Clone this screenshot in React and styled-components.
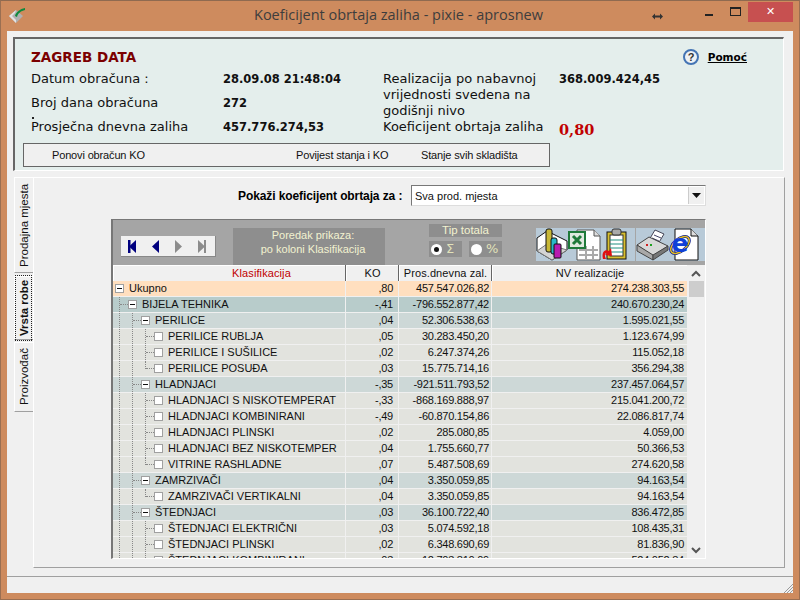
import React from "react";
import styled, { createGlobalStyle } from "styled-components";

const GlobalStyle = createGlobalStyle`
  html, body { margin: 0; padding: 0; }
  body { width: 800px; height: 600px; overflow: hidden; background: #ce8b5e; }
`;

const rows = [
  { level: 0, name: "Ukupno", ko: ",80", avg: "457.547.026,82", nv: "274.238.303,55" },
  { level: 1, name: "BIJELA TEHNIKA", ko: "-,41", avg: "-796.552.877,42", nv: "240.670.230,24" },
  { level: 2, name: "PERILICE", ko: ",04", avg: "52.306.538,63", nv: "1.595.021,55" },
  { level: 3, name: "PERILICE RUBLJA", ko: ",05", avg: "30.283.450,20", nv: "1.123.674,99" },
  { level: 3, name: "PERILICE I SUŠILICE", ko: ",02", avg: "6.247.374,26", nv: "115.052,18" },
  { level: 3, name: "PERILICE POSUĐA", ko: ",03", avg: "15.775.714,16", nv: "356.294,38", last: true },
  { level: 2, name: "HLADNJACI", ko: "-,35", avg: "-921.511.793,52", nv: "237.457.064,57" },
  { level: 3, name: "HLADNJACI S NISKOTEMPERAT", ko: "-,33", avg: "-868.169.888,97", nv: "215.041.200,72" },
  { level: 3, name: "HLADNJACI KOMBINIRANI", ko: "-,49", avg: "-60.870.154,86", nv: "22.086.817,74" },
  { level: 3, name: "HLADNJACI PLINSKI", ko: ",02", avg: "285.080,85", nv: "4.059,00" },
  { level: 3, name: "HLADNJACI BEZ NISKOTEMPER", ko: ",04", avg: "1.755.660,77", nv: "50.366,53" },
  { level: 3, name: "VITRINE RASHLADNE", ko: ",07", avg: "5.487.508,69", nv: "274.620,58", last: true },
  { level: 2, name: "ZAMRZIVAČI", ko: ",04", avg: "3.350.059,85", nv: "94.163,54" },
  { level: 3, name: "ZAMRZIVAČI VERTIKALNI", ko: ",04", avg: "3.350.059,85", nv: "94.163,54", last: true },
  { level: 2, name: "ŠTEDNJACI", ko: ",03", avg: "36.100.722,40", nv: "836.472,85" },
  { level: 3, name: "ŠTEDNJACI ELEKTRIČNI", ko: ",03", avg: "5.074.592,18", nv: "108.435,31" },
  { level: 3, name: "ŠTEDNJACI PLINSKI", ko: ",02", avg: "6.348.690,69", nv: "81.836,90" },
  { level: 3, name: "ŠTEDNJACI KOMBINIRANI", ko: ",03", avg: "12.703.810,09", nv: "524.052,84" },
];

const rowColors = ["#ffdfbf", "#b8cccb", "#cdd8d7", "#e2e3de"];

const AppIcon = () => (
  <svg width="18" height="18" viewBox="0 0 18 18">
    <path d="M0 9 L7 3 L14 9 L7 16 Z" fill="#b0b0b0" />
    <path d="M0 9 L7 16 L7 13 L3 9 L6 6 L7 3 Z" fill="#e4e4e4" />
    <path d="M6 9 C7 5 11 2 16 1 L16 3 C12 4 9 6 8 10 Z" fill="#0d8a3e" />
  </svg>
);

const ResizeIcon = () => (
  <svg width="11" height="7" viewBox="0 0 11 7">
    <path d="M0 3.5 L3 0.5 L3 2.5 L8 2.5 L8 0.5 L11 3.5 L8 6.5 L8 4.5 L3 4.5 L3 6.5 Z" fill="#333" />
  </svg>
);

const HelpIcon = () => (
  <svg width="16" height="16" viewBox="0 0 16 16">
    <circle cx="8" cy="8" r="7" fill="#eef1f4" stroke="#4474b4" strokeWidth="2" />
    <text x="8" y="12" textAnchor="middle" fontFamily="'Liberation Sans', sans-serif" fontWeight="700" fontSize="11" fill="#333">?</text>
  </svg>
);

const NavIcon = ({ dir, bar, color }) => (
  <svg width="9" height="13" viewBox="0 0 9 13">
    {dir === "left" ? <path d="M8 0 L8 13 L1 6.5 Z" fill={color} /> : <path d="M1 0 L1 13 L8 6.5 Z" fill={color} />}
    {bar && <rect x={dir === "left" ? 0 : 7} width="2.5" height="13" fill={color} />}
  </svg>
);

const ChartIcon = () => (
  <svg width="32" height="33" viewBox="0 0 32 33">
    <path d="M1 10 L11 3 L31 13 L31 22 L16 32 L1 23 Z" fill="#fff" stroke="#111" />
    <path d="M1 23 L11 16 L31 22 L16 32 Z" fill="#d4d4d4" stroke="#777" />
    <path d="M11 3 L11 16" stroke="#111" />
    <rect x="10" y="1" width="6" height="23" rx="2" fill="#c8b838" stroke="#111" />
    <rect x="15" y="10" width="6" height="16" rx="2" fill="#2ab8c8" stroke="#111" />
    <rect x="18" y="16" width="7" height="14" rx="1" fill="#b81cb0" stroke="#111" />
  </svg>
);

const ExcelIcon = () => (
  <svg width="33" height="32" viewBox="0 0 33 32">
    <path d="M9 1 L26 1 L32 7 L32 31 L9 31 Z" fill="#fff" stroke="#555" />
    <path d="M26 1 L26 7 L32 7" fill="#ddd" stroke="#555" />
    <path d="M11 21 H30 M11 26 H30 M18 17 V30 M25 17 V30" stroke="#aaa" strokeWidth="2" />
    <rect x="1" y="3" width="16" height="16" fill="#dfe9df" stroke="#1f7a3a" strokeWidth="2" />
    <path d="M5 7 L13 15 M13 7 L5 15" stroke="#1f7a3a" strokeWidth="3" />
  </svg>
);

const ClipIcon = () => (
  <svg width="26" height="33" viewBox="0 0 26 33">
    <rect x="6" y="4" width="19" height="27" fill="#d8c030" stroke="#111" />
    <rect x="9" y="7" width="13" height="21" fill="#fff" stroke="#333" />
    <path d="M9 12 H22 M9 16 H22 M9 20 H22 M9 24 H22" stroke="#1f8f80" />
    <rect x="11" y="1" width="9" height="6" rx="2" fill="#aaa" stroke="#333" />
    <path d="M2 31 C0 23 5 21 8 23 L10 20 L11 28 L4 27 L6 25 C4 25 3 27 5 31 Z" fill="#e01010" />
  </svg>
);

const PrinterIcon = () => (
  <svg width="33" height="32" viewBox="0 0 33 32">
    <path d="M13 11 L19 1 L28 5 L22 15 Z" fill="#fff" stroke="#445" />
    <path d="M18 6 L25 9 M16 9 L23 12" stroke="#446" />
    <path d="M1 16 L13 8 L32 17 L17 27 Z" fill="#d8d8d8" stroke="#444" />
    <path d="M1 16 L17 26 L17 31 L1 22 Z" fill="#a8a8a8" stroke="#444" />
    <path d="M17 26 L32 17 L32 21 L17 31 Z" fill="#777" stroke="#444" />
    <rect x="10" y="15" width="2" height="2" fill="#d02020" />
    <rect x="14" y="15" width="2" height="2" fill="#20a020" />
  </svg>
);

const BrowserIcon = () => (
  <svg width="30" height="33" viewBox="0 0 30 33">
    <path d="M6 1 L22 1 L29 8 L29 32 L6 32 Z" fill="#fff" stroke="#111" />
    <path d="M22 1 L22 8 L29 8" fill="#ddd" stroke="#111" />
    <ellipse cx="11" cy="17" rx="11" ry="6" transform="rotate(-40 11 17)" fill="none" stroke="#10208c" strokeWidth="3" />
    <ellipse cx="11" cy="17" rx="11" ry="6" transform="rotate(-40 11 17)" fill="none" stroke="#e8c020" strokeWidth="1.4" />
    <text x="11" y="24" textAnchor="middle" fontFamily="'DejaVu Sans', sans-serif" fontWeight="700" fontSize="25" fill="#1040d8">e</text>
  </svg>
);

const App = () => (
  <>
    <GlobalStyle />
    <Window>
      <TitleBar>
        <TitleIcon><AppIcon /></TitleIcon>
        <Title>Koeficijent obrtaja zaliha - pixie - aprosnew</Title>
        <Resize><ResizeIcon /></Resize>
        <WinButton><MinGlyph /></WinButton>
        <WinButton><MaxGlyph /></WinButton>
        <CloseButton>✕</CloseButton>
      </TitleBar>

      <Client>
        <TopPanel>
          <Company>
            <CompanyName>ZAGREB DATA</CompanyName>
            <HelpLink><HelpIcon /><HelpText>Pomoć</HelpText></HelpLink>
          </Company>
          <Facts>
            <FactColumn>
              <FactRow>
                <Label>Datum obračuna :</Label>
                <Value>28.09.08 21:48:04</Value>
              </FactRow>
              <FactRow>
                <Label>Broj dana obračuna</Label>
                <Value>272</Value>
              </FactRow>
              <StrayDot />
              <FactRow>
                <Label>Prosječna dnevna zaliha</Label>
                <Value>457.776.274,53</Value>
              </FactRow>
            </FactColumn>
            <WideColumn>
              <WideRow>
                <Label>Realizacija po nabavnoj vrijednosti svedena na godišnji nivo</Label>
                <Value>368.009.424,45</Value>
              </WideRow>
              <WideRow>
                <NoWrapLabel>Koeficijent obrtaja zaliha</NoWrapLabel>
                <Coefficient>0,80</Coefficient>
              </WideRow>
            </WideColumn>
          </Facts>
          <ActionStrip>
            <Action>Ponovi obračun KO</Action>
            <Action>Povijest stanja i KO</Action>
            <Action>Stanje svih skladišta</Action>
          </ActionStrip>
        </TopPanel>

        <TabArea>
          <TabColumn>
            <Tab $height={96} $gap={3}>Prodajna mjesta</Tab>
            <Tab $height={64} $gap={2} $active><Focus>Vrsta robe</Focus></Tab>
            <Tab $height={70} $gap={0}>Proizvođač</Tab>
          </TabColumn>
          <TabPage>
            <Picker>
              <PickerLabel>Pokaži koeficijent obrtaja za :</PickerLabel>
              <Select>
                <SelectText>Sva prod. mjesta</SelectText>
                <SelectArrow>
                  <svg width="9" height="5" viewBox="0 0 9 5"><path d="M0 0 H9 L4.5 5 Z" fill="#111" /></svg>
                </SelectArrow>
              </Select>
            </Picker>

            <GridBox>
              <Toolbar>
                <NavBar>
                  <NavIcon dir="left" bar color="#00007f" />
                  <NavIcon dir="left" color="#00007f" />
                  <NavIcon dir="right" color="#8c8c8c" />
                  <NavIcon dir="right" bar color="#8c8c8c" />
                </NavBar>
                <OrderBox>Poredak prikaza:<br />po koloni Klasifikacija</OrderBox>
                <TotalBox>
                  <TotalTitle>Tip totala</TotalTitle>
                  <TotalOptions>
                    <TotalOption><Radio $checked /><OptionGlyph>Σ</OptionGlyph></TotalOption>
                    <TotalOption><Radio /><OptionGlyph>%</OptionGlyph></TotalOption>
                  </TotalOptions>
                </TotalBox>
                <IconStrip>
                  <IconGroup $width={99}>
                    <ChartIcon />
                    <ExcelIcon />
                    <ClipIcon />
                  </IconGroup>
                  <IconGroup $width={69}>
                    <PrinterIcon />
                    <BrowserIcon />
                  </IconGroup>
                </IconStrip>
              </Toolbar>

              <GridBody>
                <TableSide>
                  <HeaderRow>
                    <HeaderCell $red>Klasifikacija</HeaderCell>
                    <HeaderCell>KO</HeaderCell>
                    <HeaderCell>Pros.dnevna zal.</HeaderCell>
                    <HeaderCell>NV realizacije</HeaderCell>
                  </HeaderRow>
                  {rows.map((row) => (
                    <Row key={row.name} $bg={rowColors[row.level]}>
                      <TreeCell>
                        {Array.from({ length: row.level }, (_, i) => (
                          <Guide key={i} $end={row.last && i === row.level - 1}>
                            {i === row.level - 1 && <Elbow />}
                          </Guide>
                        ))}
                        <Expander $leaf={row.level === 3} />
                        <RowName>{row.name}</RowName>
                      </TreeCell>
                      <NumCell $pad={5}>{row.ko}</NumCell>
                      <NumCell $pad={2}>{row.avg}</NumCell>
                      <NumCell $pad={3}>{row.nv}</NumCell>
                    </Row>
                  ))}
                </TableSide>
                <ScrollBar>
                  <ScrollArrow><svg width="10" height="7" viewBox="0 0 10 7"><path d="M1 6 L5 2 L9 6" fill="none" stroke="#555" strokeWidth="2" /></svg></ScrollArrow>
                  <ScrollThumb />
                  <ScrollTrack />
                  <ScrollArrow><svg width="10" height="7" viewBox="0 0 10 7"><path d="M1 1 L5 5 L9 1" fill="none" stroke="#555" strokeWidth="2" /></svg></ScrollArrow>
                </ScrollBar>
              </GridBody>
            </GridBox>
          </TabPage>
        </TabArea>

        <StatusBar>
          <Grip viewBox="0 0 10 10"><path d="M10 1 L1 10 M10 4 L4 10 M10 7 L7 10" stroke="#999" /></Grip>
        </StatusBar>
      </Client>
    </Window>
  </>
);

export default App;

const Window = styled.div`
  width: 800px;
  height: 600px;
  display: flex;
  flex-direction: column;
  box-sizing: border-box;
  background: #ce8b5e;
  border: 1px solid #9a6f52;
  border-top-color: #8f6a50;
  padding: 0 6px 6px;
  overflow: hidden;
`;

const TitleBar = styled.div`
  height: 30px;
  flex: none;
  display: flex;
  align-items: flex-start;
`;

const TitleIcon = styled.div`
  width: 20px;
  height: 20px;
  margin: 6px 0 0 2px;
`;

const Title = styled.div`
  flex: 1;
  padding: 5px 0 0 225px;
  font: 14.5px/18px "Open Sans", "Liberation Sans", sans-serif;
  color: #3d3d3d;
`;

const Resize = styled.div`
  margin: 5px 33px 0 0;
  height: 12px;
`;

const WinButton = styled.div`
  width: 26px;
  height: 20px;
  display: flex;
  align-items: center;
  justify-content: center;
`;

const MinGlyph = styled.div`
  width: 8px;
  height: 2px;
  margin-top: 7px;
  background: #222;
`;

const MaxGlyph = styled.div`
  width: 9px;
  height: 6px;
  border: 1px solid #222;
  border-top-width: 2px;
`;

const CloseButton = styled.div`
  width: 45px;
  height: 20px;
  margin-top: 1px;
  background: #c75050;
  color: #fff;
  font: 700 11px/20px "DejaVu Sans", sans-serif;
  text-align: center;
`;

const Client = styled.div`
  flex: 1;
  min-height: 0;
  display: flex;
  flex-direction: column;
  background: #f0f0f0;
  padding: 6px 0 0 6px;
`;

const TopPanel = styled.div`
  height: 134px;
  width: 771px;
  flex: none;
  box-sizing: border-box;
  background: #e4eeec;
  border-top: 2px solid #666;
  border-left: 2px solid #666;
  border-bottom: 1px solid #fff;
  border-right: 1px solid #fff;
  padding: 0 0 0 8px;
`;

const Company = styled.div`
  height: 26px;
  display: flex;
  align-items: center;
  padding: 5px 36px 0 8px;
`;

const CompanyName = styled.div`
  flex: 1;
  font: 700 13.5px/18px "DejaVu Sans", sans-serif;
  color: #7b0000;
`;

const HelpLink = styled.div`
  display: flex;
  align-items: center;
  gap: 9px;
`;

const HelpText = styled.span`
  font: 700 10.5px/16px "DejaVu Sans", sans-serif;
  color: #000;
  text-decoration: underline;
`;

const Facts = styled.div`
  display: flex;
  height: 72px;
  padding-left: 8px;
`;

const FactColumn = styled.div`
  width: 352px;
  padding-top: 1px;
  box-sizing: border-box;
  display: flex;
  flex-direction: column;
`;

/* tail of a clipped colon under "Broj dana obračuna" */
const StrayDot = styled.div`
  width: 2px;
  height: 2px;
  margin: 6px 0 0 1px;
  background: #222;
`;

const WideColumn = styled.div`
  width: 340px;
  padding-top: 1px;
  box-sizing: border-box;
  display: flex;
  flex-direction: column;
`;

const FactRow = styled.div`
  display: grid;
  grid-template-columns: 192px 1fr;
  height: 16px;
  align-items: center;
  &:first-child { margin-bottom: 8px; }
`;

const WideRow = styled.div`
  display: grid;
  grid-template-columns: 176px 1fr;
  align-items: start;
`;

const Label = styled.div`
  font: 13px/16px "DejaVu Sans", sans-serif;
  color: #111;
`;

const NoWrapLabel = styled(Label)`
  white-space: nowrap;
`;

const Value = styled.div`
  font: 700 11.5px/16px "DejaVu Sans", sans-serif;
  color: #111;
`;

const Coefficient = styled.div`
  font: 700 14.5px/16px "DejaVu Serif", serif;
  color: #c00000;
  padding-top: 3px;
`;

const ActionStrip = styled.div`
  width: 527px;
  height: 24px;
  margin-top: 1px;
  box-sizing: border-box;
  display: grid;
  grid-template-columns: 244px 125px 1fr;
  align-items: center;
  padding-left: 28px;
  background: #f0f0f0;
  border: 1px solid #666;
`;

const Action = styled.div`
  font: 11px/14px "Liberation Sans", sans-serif;
  letter-spacing: -0.15px;
  color: #111;
  white-space: nowrap;
`;

const TabArea = styled.div`
  flex: 1;
  min-height: 0;
  display: flex;
  padding: 6px 0 0 1px;
`;

const TabColumn = styled.div`
  width: 19px;
  flex: none;
  display: flex;
  flex-direction: column;
`;

/* rotated 180deg, so its top border is drawn at the bottom and its right one on the left */
const Tab = styled.div`
  height: ${(p) => p.$height}px;
  margin-bottom: ${(p) => p.$gap}px;
  box-sizing: border-box;
  display: flex;
  align-items: center;
  justify-content: center;
  writing-mode: vertical-rl;
  transform: rotate(180deg);
  background: #f0f0f0;
  border-right: 1px solid #fff;
  border-bottom: 1px solid #fff;
  border-top: 1px solid #a0a0a0;
  font: ${(p) => (p.$active ? 700 : 400)} 11.5px/14px "Liberation Sans", sans-serif;
  white-space: nowrap;
  color: #111;
`;

const Focus = styled.span`
  outline: 1px dotted #222;
  line-height: 15px;
  padding: 4px 0;
`;

const TabPage = styled.div`
  width: 752px;
  height: 391px;
  box-sizing: border-box;
  background: #f0f0f0;
  border-top: 1px solid #fff;
  border-left: 1px solid #fff;
  border-right: 1px solid #a0a0a0;
  border-bottom: 1px solid #a0a0a0;
  padding: 7px 0 0 77px;
`;

const Picker = styled.div`
  height: 21px;
  display: flex;
  align-items: center;
  padding-left: 127px;
  gap: 5px;
`;

const PickerLabel = styled.div`
  width: 168px;
  font: 700 12px/16px "Liberation Sans", sans-serif;
  letter-spacing: -0.1px;
  white-space: nowrap;
`;

const Select = styled.div`
  width: 295px;
  height: 21px;
  box-sizing: border-box;
  display: flex;
  align-items: center;
  background: #fff;
  border: 1px solid #777;
  border-right-color: #ddd;
  border-bottom-color: #ddd;
`;

const SelectText = styled.div`
  flex: 1;
  padding-left: 3px;
  font: 11px/16px "Liberation Sans", sans-serif;
  color: #111;
`;

const SelectArrow = styled.div`
  width: 15px;
  height: 17px;
  margin-right: 1px;
  display: flex;
  align-items: center;
  justify-content: center;
  background: #f0f0f0;
  border-left: 1px solid #ccc;
`;

const GridBox = styled.div`
  width: 595px;
  height: 340px;
  margin-top: 13px;
  box-sizing: border-box;
  border-top: 1px solid #777;
  border-left: 2px solid #777;
  border-bottom: 1px solid #fff;
  border-right: 1px solid #fff;
  display: flex;
  flex-direction: column;
  overflow: hidden;
`;

const Toolbar = styled.div`
  height: 45px;
  flex: none;
  display: flex;
  background: #a5a5a5;
`;

const NavBar = styled.div`
  width: 95px;
  height: 21px;
  margin: 16px 0 0 8px;
  box-sizing: border-box;
  display: flex;
  align-items: center;
  justify-content: space-between;
  padding: 0 9px 0 7px;
  background: #f0f0f0;
  border-right: 1px solid #888;
  border-bottom: 1px solid #888;
`;

const OrderBox = styled.div`
  width: 152px;
  height: 37px;
  margin: 8px 0 0 17px;
  padding-left: 8px;
  box-sizing: border-box;
  background: #8e8e8e;
  text-align: center;
  font: 11px/14px "Liberation Sans", sans-serif;
  color: #f2f2d0;
`;

const TotalBox = styled.div`
  width: 73px;
  margin: 4px 0 0 44px;
`;

const TotalTitle = styled.div`
  height: 13px;
  background: #8e8e8e;
  text-align: center;
  font: 11.5px/13px "Liberation Sans", sans-serif;
  color: #f2f2d0;
`;

const TotalOptions = styled.div`
  display: flex;
  justify-content: space-between;
  margin-top: 4px;
`;

const TotalOption = styled.div`
  width: 33px;
  height: 16px;
  padding-left: 2px;
  box-sizing: border-box;
  display: flex;
  align-items: center;
  gap: 4px;
  background: #8e8e8e;
`;

const Radio = styled.div`
  width: 11px;
  height: 11px;
  flex: none;
  box-sizing: border-box;
  border-radius: 50%;
  background: #fff;
  display: flex;
  align-items: center;
  justify-content: center;
  &::after {
    content: "";
    width: 5px;
    height: 5px;
    border-radius: 50%;
    background: ${(p) => (p.$checked ? "#111" : "transparent")};
  }
`;

const OptionGlyph = styled.span`
  font: 13px/14px "DejaVu Sans", sans-serif;
  color: #e2e2ba;
`;

const IconStrip = styled.div`
  display: flex;
  height: 33px;
  margin: 8px 0 0 34px;
  gap: 1px;
`;

const IconGroup = styled.div`
  width: ${(p) => p.$width}px;
  display: flex;
  align-items: center;
  background: #b8cad8;
`;

const GridBody = styled.div`
  flex: 1;
  min-height: 0;
  display: flex;
`;

const TableSide = styled.div`
  width: 575px;
  overflow: hidden;
`;

const columns = "232px 52px 92px 195px";

const HeaderRow = styled.div`
  display: grid;
  grid-template-columns: ${columns};
  column-gap: 1px;
  height: 16px;
  background: #666;
`;

const HeaderCell = styled.div`
  background: #f0f0f0;
  border-top: 1px solid #fff;
  border-left: 1px solid #fff;
  box-sizing: border-box;
  padding-left: ${(p) => (p.$red ? 64 : 0)}px;
  text-align: center;
  font: 11px/14px "Liberation Sans", sans-serif;
  letter-spacing: 0.1px;
  color: ${(p) => (p.$red ? "#c00000" : "#111")};
  white-space: nowrap;
`;

const Row = styled.div`
  display: grid;
  grid-template-columns: ${columns};
  column-gap: 1px;
  height: 16px;
  box-sizing: border-box;
  border-bottom: 1px solid #f0f0f0;
  background: #f0f0f0;
  > * { background: ${(p) => p.$bg}; }
`;

const TreeCell = styled.div`
  display: flex;
  align-items: center;
  padding-left: 2px;
  overflow: hidden;
`;

const Guide = styled.span`
  width: 9px;
  margin-left: 4px;
  height: ${(p) => (p.$end ? "50%" : "100%")};
  align-self: flex-start;
  flex: none;
  box-sizing: border-box;
  border-left: 1px dotted #888;
`;

const Elbow = styled.span`
  display: block;
  height: 8px;
  box-sizing: border-box;
  border-bottom: 1px dotted #888;
`;

const Expander = styled.span`
  width: 9px;
  height: 9px;
  flex: none;
  box-sizing: border-box;
  border: 1px solid #a0a0a0;
  background: #fff;
  display: flex;
  align-items: center;
  justify-content: center;
  &::after {
    content: "";
    width: 5px;
    height: 1px;
    background: ${(p) => (p.$leaf ? "transparent" : "#111")};
  }
`;

const RowName = styled.span`
  margin-left: 5px;
  font: 11px/15px "Liberation Sans", sans-serif;
  color: #111;
  white-space: nowrap;
`;

const NumCell = styled.div`
  text-align: right;
  padding-right: ${(p) => p.$pad}px;
  font: 11px/15px "Liberation Sans", sans-serif;
  letter-spacing: -0.25px;
  color: #111;
`;

const ScrollBar = styled.div`
  width: 18px;
  display: flex;
  flex-direction: column;
  align-items: center;
  background: #f0f0f0;
`;

const ScrollArrow = styled.div`
  height: 16px;
  display: flex;
  align-items: center;
  justify-content: center;
`;

const ScrollThumb = styled.div`
  width: 15px;
  height: 16px;
  background: #cdcdcd;
`;

const ScrollTrack = styled.div`
  flex: 1;
`;

const StatusBar = styled.div`
  height: 16px;
  margin: auto 0 0 -6px;
  flex: none;
  display: flex;
  justify-content: flex-end;
  align-items: flex-end;
  border-top: 1px solid #a0a0a0;
`;

const Grip = styled.svg`
  width: 10px;
  height: 10px;
`;
